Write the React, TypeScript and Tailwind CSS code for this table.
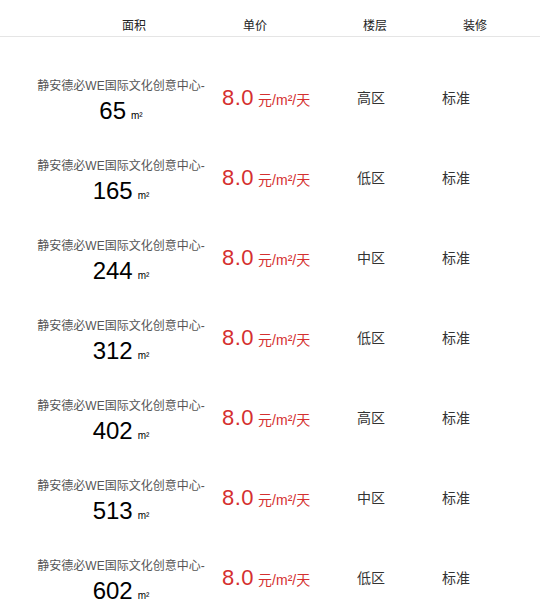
import React from 'react';

type Listing = {
  area: number;
  floor: string;
};

const listings: Listing[] = [
  { area: 65, floor: '高区' },
  { area: 165, floor: '低区' },
  { area: 244, floor: '中区' },
  { area: 312, floor: '低区' },
  { area: 402, floor: '高区' },
  { area: 513, floor: '中区' },
  { area: 602, floor: '低区' },
];

const font = "font-['Liberation_Sans','Noto_Sans_CJK_SC',sans-serif]";

const App: React.FC = () => {
  return (
    <div className={`${font} w-[540px] bg-white`}>
      {/* header */}
      <div className="flex h-[37px] border-b border-[#e5e5e5] pl-[74px] pt-[18px] text-[12px] leading-[16px] text-[#222]">
        <div className="w-[120px] text-center">面积</div>
        <div className="w-[122px] text-center">单价</div>
        <div className="w-[118px] text-center">楼层</div>
        <div className="w-[82px] text-center">装修</div>
      </div>

      {/* rows */}
      <div className="pt-[21px]">
        {listings.map((item) => (
          <div key={item.area} className="flex h-[80px]">
            <div className="flex w-[222px] flex-col items-center pl-[37px] pr-[17px] pt-[20px]">
              <div className="whitespace-nowrap text-[12px] leading-[16px] text-[#555]">
                静安德必WE国际文化创意中心-
              </div>
              <div className="mt-[2px] flex items-baseline leading-[30px] text-black">
                <span className="text-[24px]">{item.area}</span>
                <span className="ml-[5px] text-[10px]">m²</span>
              </div>
            </div>
            <div className="flex w-[135px] items-center">
              <div className="flex items-baseline text-[#d5302f]">
                <span className="text-[22px] leading-[28px] tracking-[0.5px]">8.0</span>
                <span className="ml-[4px] text-[14px]">元/m²/天</span>
              </div>
            </div>
            <div className="flex w-[85px] items-center text-[14px] text-[#333]">{item.floor}</div>
            <div className="flex items-center text-[14px] text-[#333]">标准</div>
          </div>
        ))}
      </div>
    </div>
  );
};

export default App;
